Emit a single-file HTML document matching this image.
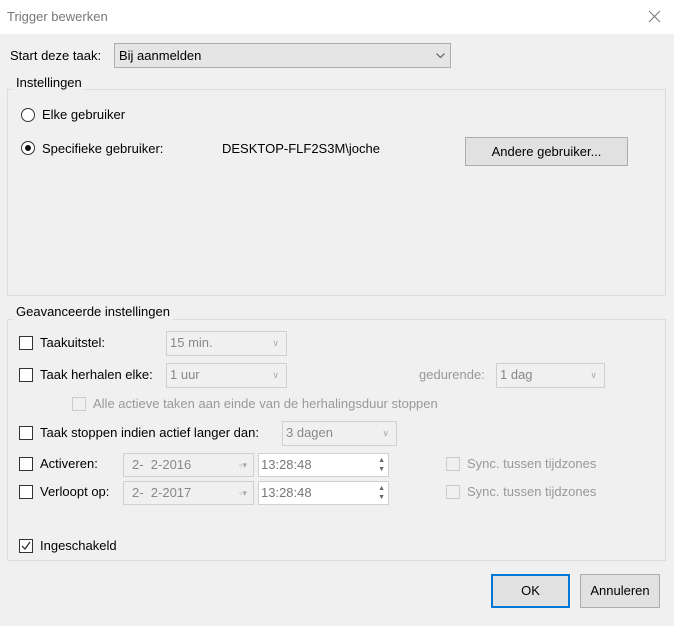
<!DOCTYPE html>
<html><head><style>
*{box-sizing:border-box;margin:0;padding:0}
body{width:674px;height:626px;background:#f0f0f0;font-family:"Liberation Sans",sans-serif;font-size:13px;color:#000;position:relative;overflow:hidden}
.a{position:absolute;white-space:nowrap}
.t{line-height:16px}
.grp{position:absolute;border:1px solid #dcdcdc}
.lbl{position:absolute;background:#f0f0f0;padding:0 3px;line-height:16px}
.cb{position:absolute;width:14px;height:14px;border:1px solid #333;background:#fff}
.cbd{position:absolute;width:14px;height:14px;border:1px solid #ccc;background:#f0f0f0}
.combo{position:absolute;border:1px solid #d0d0d0;background:#f0f0f0;color:#888;padding-left:3px;line-height:22px}
.combo .v{position:absolute;right:7px;top:0;color:#aaa;font-size:9px}
.btn{position:absolute;background:#e1e1e1;border:1px solid #adadad;text-align:center}
.g{color:#999}
</style></head><body>
<div class="a" style="left:0;top:0;width:674px;height:34px;background:#fff"></div>
<div class="a t" style="left:7px;top:9px;color:#777;font-size:13px">Trigger bewerken</div>
<svg class="a" style="left:648px;top:10px" width="13" height="13"><path d="M1 1L12 12M12 1L1 12" stroke="#777" stroke-width="1"/></svg>

<div class="a t" style="left:10px;top:48px">Start deze taak:</div>
<div class="a" style="left:114px;top:43px;width:337px;height:25px;background:#e5e5e5;border:1px solid #adadad;padding-left:4px;line-height:23px">Bij aanmelden</div>
<svg class="a" style="left:436px;top:53px" width="9" height="6"><path d="M0.5 0.5L4.5 4.5L8.5 0.5" stroke="#555" fill="none"/></svg>

<div class="grp" style="left:7px;top:89px;width:659px;height:207px"></div>
<div class="lbl" style="left:13px;top:75px">Instellingen</div>
<div class="a" style="left:21px;top:108px;width:14px;height:14px;border:1px solid #333;border-radius:50%;background:#fff"></div>
<div class="a t" style="left:42px;top:107px">Elke gebruiker</div>
<div class="a" style="left:21px;top:141px;width:14px;height:14px;border:1px solid #333;border-radius:50%;background:#fff"></div>
<div class="a" style="left:25px;top:145px;width:6px;height:6px;border-radius:50%;background:#111"></div>
<div class="a t" style="left:42px;top:141px">Specifieke gebruiker:</div>
<div class="a t" style="left:222px;top:141px">DESKTOP-FLF2S3M\joche</div>
<div class="btn" style="left:465px;top:137px;width:163px;height:29px;line-height:27px">Andere gebruiker...</div>

<div class="grp" style="left:7px;top:319px;width:659px;height:242px"></div>
<div class="lbl" style="left:13px;top:304px">Geavanceerde instellingen</div>

<div class="cb" style="left:19px;top:336px"></div><div class="a t" style="left:40px;top:335px">Taakuitstel:</div>
<div class="combo" style="left:166px;top:331px;width:121px;height:25px">15 min.<span class="v">&#8744;</span></div>

<div class="cb" style="left:19px;top:368px"></div><div class="a t" style="left:40px;top:367px">Taak herhalen elke:</div>
<div class="combo" style="left:166px;top:363px;width:121px;height:25px">1 uur<span class="v">&#8744;</span></div>
<div class="a t g" style="left:419px;top:367px">gedurende:</div>
<div class="combo" style="left:496px;top:363px;width:109px;height:25px">1 dag<span class="v">&#8744;</span></div>

<div class="cbd" style="left:72px;top:397px"></div><div class="a t g" style="left:93px;top:396px">Alle actieve taken aan einde van de herhalingsduur stoppen</div>

<div class="cb" style="left:19px;top:426px"></div><div class="a t" style="left:40px;top:425px">Taak stoppen indien actief langer dan:</div>
<div class="combo" style="left:282px;top:421px;width:115px;height:25px">3 dagen<span class="v">&#8744;</span></div>

<div class="cb" style="left:19px;top:457px"></div><div class="a t" style="left:40px;top:456px">Activeren:</div>
<div class="combo" style="left:123px;top:453px;width:131px;height:24px;padding-left:8px">2-&nbsp; 2-2016<span class="v" style="right:6px">&#9643;&#9662;</span></div>
<div class="a" style="left:258px;top:453px;width:131px;height:24px;border:1px solid #d0d0d0;background:#fff;color:#777;padding-left:2px;line-height:22px">13:28:48<span style="position:absolute;right:3px;top:2px;font-size:7px;line-height:9px;color:#666">&#9650;<br>&#9660;</span></div>
<div class="cbd" style="left:446px;top:457px"></div><div class="a t g" style="left:467px;top:456px">Sync. tussen tijdzones</div>

<div class="cb" style="left:19px;top:485px"></div><div class="a t" style="left:40px;top:484px">Verloopt op:</div>
<div class="combo" style="left:123px;top:481px;width:131px;height:24px;padding-left:8px">2-&nbsp; 2-2017<span class="v" style="right:6px">&#9643;&#9662;</span></div>
<div class="a" style="left:258px;top:481px;width:131px;height:24px;border:1px solid #d0d0d0;background:#fff;color:#777;padding-left:2px;line-height:22px">13:28:48<span style="position:absolute;right:3px;top:2px;font-size:7px;line-height:9px;color:#666">&#9650;<br>&#9660;</span></div>
<div class="cbd" style="left:446px;top:485px"></div><div class="a t g" style="left:467px;top:484px">Sync. tussen tijdzones</div>

<div class="cb" style="left:19px;top:539px"></div>
<svg class="a" style="left:21px;top:541px" width="10" height="10"><path d="M1 5L4 8L9 1" stroke="#222" fill="none" stroke-width="1.2"/></svg>
<div class="a t" style="left:40px;top:538px">Ingeschakeld</div>

<div class="btn" style="left:491px;top:574px;width:79px;height:34px;line-height:30px;border:2px solid #0078d7">OK</div>
<div class="btn" style="left:580px;top:574px;width:80px;height:34px;line-height:32px">Annuleren</div>
</body></html>
